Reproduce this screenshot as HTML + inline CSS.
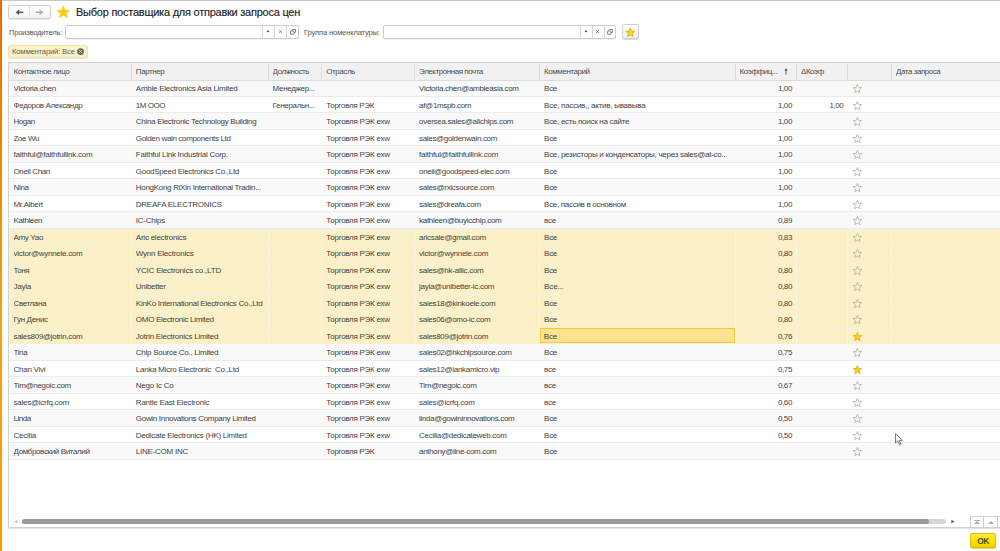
<!DOCTYPE html><html><head><meta charset="utf-8"><style>
*{box-sizing:border-box;margin:0;padding:0}
html,body{width:1000px;height:551px;overflow:hidden;background:#fff;font-family:"Liberation Sans",sans-serif;color:#444}
.a{position:absolute;white-space:nowrap}
.cell{position:absolute;overflow:hidden;white-space:nowrap;font-size:8px;letter-spacing:-0.25px;line-height:16.5px}
.r{padding-top:1.0px}
</style></head><body>
<div class="a" style="left:0;top:0;width:2px;height:551px;background:linear-gradient(#ee6a00 0%,#f48c00 35%,#f7a010 60%,#ff9a00 100%)"></div>
<div class="a" style="left:2px;top:0;width:998px;height:1px;background:#c8c8c8"></div>
<div class="a" style="left:8px;top:4.8px;width:42.5px;height:14.2px;border:1px solid #d0d0d0;border-radius:2px;background:linear-gradient(#fff,#f2f2f2);box-shadow:0 0.6px 0 #d6d6d6"></div>
<div class="a" style="left:28.9px;top:5.8px;width:1px;height:11.6px;background:#e2e2e2"></div>
<svg class="a" style="left:15px;top:9px" width="9" height="7" viewBox="0 0 9 7"><path d="M8.2 3.3H3.5" stroke="#555" stroke-width="1.5"/><path d="M0.6 3.3L4.2 0.4V6.2z" fill="#555"/></svg>
<svg class="a" style="left:35.2px;top:9px" width="9" height="7" viewBox="0 0 9 7"><path d="M0.8 3.3H5" stroke="#aaa" stroke-width="1.5"/><path d="M8.3 3.3L4.7 0.4V6.2z" fill="#aaa"/></svg>
<svg class="a" style="left:0;top:0" width="100" height="30"><path d="M63.40 5.91 L65.27 9.99 L69.96 10.40 L66.42 13.32 L67.46 17.65 L63.40 15.38 L59.34 17.65 L60.38 13.32 L56.84 10.40 L61.53 9.99Z" fill="#f8cb1c" stroke="#f3c418" stroke-width="0.4" stroke-linejoin="round"/></svg>
<div class="a" style="left:76px;top:5px;font-size:11px;letter-spacing:-0.24px;line-height:14px;color:#222;-webkit-text-stroke:0.15px #222">Выбор поставщика для отправки запроса цен</div>
<div class="a" style="left:9px;top:25.8px;font-size:7.6px;letter-spacing:-0.22px;line-height:14px;color:#555">Производитель:</div>
<div class="a" style="left:64.8px;top:24.8px;width:234.09999999999997px;height:14px;border:1px solid #cdcdcd;border-radius:2px;background:#fff;box-shadow:0 0.5px 0 #e6e6e6"></div><div class="a" style="left:262.0px;top:25.5px;width:1px;height:13px;background:#d6d6d6"></div><div class="a" style="left:274.0px;top:25.5px;width:1px;height:13px;background:#d6d6d6"></div><div class="a" style="left:286.0px;top:25.5px;width:1px;height:13px;background:#d6d6d6"></div><svg class="a" style="left:266.2px;top:29.5px" width="4" height="3" viewBox="0 0 4 3"><path d="M0.4 0.7h3.2L2 2.5z" fill="#333"/></svg><svg class="a" style="left:277.79999999999995px;top:29px" width="5" height="5" viewBox="0 0 5 5"><path d="M1 1.1L4 4.1M4 1.1L1 4.1" stroke="#777" stroke-width="0.8"/></svg><svg class="a" style="left:289.59999999999997px;top:28.5px" width="6" height="6" viewBox="0 0 6 6"><rect x="2.0" y="0.5" width="3.5" height="3.1" rx="0.25" fill="#fff" stroke="#666" stroke-width="0.75"/><rect x="0.5" y="2.1" width="3.5" height="3.2" rx="0.25" fill="#fff" stroke="#666" stroke-width="0.75"/></svg>
<div class="a" style="left:304px;top:25.8px;font-size:7.6px;letter-spacing:-0.17px;line-height:14px;color:#555">Группа номенклатуры:</div>
<div class="a" style="left:383.1px;top:24.8px;width:233.29999999999995px;height:14px;border:1px solid #cdcdcd;border-radius:2px;background:#fff;box-shadow:0 0.5px 0 #e6e6e6"></div><div class="a" style="left:579.5px;top:25.5px;width:1px;height:13px;background:#d6d6d6"></div><div class="a" style="left:591.5px;top:25.5px;width:1px;height:13px;background:#d6d6d6"></div><div class="a" style="left:603.5px;top:25.5px;width:1px;height:13px;background:#d6d6d6"></div><svg class="a" style="left:583.6999999999999px;top:29.5px" width="4" height="3" viewBox="0 0 4 3"><path d="M0.4 0.7h3.2L2 2.5z" fill="#333"/></svg><svg class="a" style="left:595.3px;top:29px" width="5" height="5" viewBox="0 0 5 5"><path d="M1 1.1L4 4.1M4 1.1L1 4.1" stroke="#777" stroke-width="0.8"/></svg><svg class="a" style="left:607.1px;top:28.5px" width="6" height="6" viewBox="0 0 6 6"><rect x="2.0" y="0.5" width="3.5" height="3.1" rx="0.25" fill="#fff" stroke="#666" stroke-width="0.75"/><rect x="0.5" y="2.1" width="3.5" height="3.2" rx="0.25" fill="#fff" stroke="#666" stroke-width="0.75"/></svg>
<div class="a" style="left:622px;top:24.3px;width:16.7px;height:14.4px;border:1px solid #d2d2d2;border-radius:2px;background:linear-gradient(#fff,#f0f0f0);box-shadow:0 0.7px 0 #d0d0d0"></div>
<svg class="a" style="left:620px;top:22px" width="20" height="20"><path d="M10.30 6.10 L11.54 9.09 L14.77 9.35 L12.31 11.45 L13.06 14.60 L10.30 12.92 L7.54 14.60 L8.29 11.45 L5.83 9.35 L9.06 9.09Z" fill="#f8d630" stroke="#e2a800" stroke-width="0.8" stroke-linejoin="round"/></svg>
<div class="a" style="left:8.4px;top:45px;width:79.2px;height:12.6px;border:1px solid #efe2b0;border-radius:2px;background:#fcf2c8;box-shadow:0 0.5px 0.5px #e8dcc0"></div>
<div class="a" style="left:12px;top:45.8px;font-size:7.6px;letter-spacing:-0.15px;line-height:12.5px;color:#5e5e5e">Комментарий: Все</div>
<svg class="a" style="left:76px;top:47px" width="9" height="9" viewBox="0 0 9 9"><circle cx="4.56" cy="4.55" r="3.4" fill="#6b6752"/><path d="M3 3L6.1 6.1M6.1 3L3 6.1" stroke="#ddd6b8" stroke-width="0.9"/></svg>
<div class="a" style="left:8px;top:62.2px;width:1000px;height:465.8px;border:1px solid #d2d2d2;background:#fff;box-shadow:0 1px 0 #e2e2e2"></div>
<div class="a" style="left:9px;top:63.2px;width:1000px;height:17.099999999999994px;background:#f1f1f1"></div>
<div class="cell" style="left:13.5px;top:62.900000000000006px;width:115.75px;line-height:17.099999999999994px;color:#4d4d4d;letter-spacing:-0.45px">Контактное лицо</div>
<div class="a" style="left:130.75px;top:63.2px;width:1px;height:17.099999999999994px;background:#dedede"></div>
<div class="cell" style="left:135.85px;top:62.900000000000006px;width:129.75px;line-height:17.099999999999994px;color:#4d4d4d;letter-spacing:-0.45px">Партнер</div>
<div class="a" style="left:267.5px;top:63.2px;width:1px;height:17.099999999999994px;background:#dedede"></div>
<div class="cell" style="left:272.6px;top:62.900000000000006px;width:46.75px;line-height:17.099999999999994px;color:#4d4d4d;letter-spacing:-0.45px">Должность</div>
<div class="a" style="left:321.25px;top:63.2px;width:1px;height:17.099999999999994px;background:#dedede"></div>
<div class="cell" style="left:326.35px;top:62.900000000000006px;width:85.75px;line-height:17.099999999999994px;color:#4d4d4d;letter-spacing:-0.45px">Отрасль</div>
<div class="a" style="left:414.0px;top:63.2px;width:1px;height:17.099999999999994px;background:#dedede"></div>
<div class="cell" style="left:419.1px;top:62.900000000000006px;width:118.0px;line-height:17.099999999999994px;color:#4d4d4d;letter-spacing:-0.45px">Электронная почта</div>
<div class="a" style="left:539.0px;top:63.2px;width:1px;height:17.099999999999994px;background:#dedede"></div>
<div class="cell" style="left:544.1px;top:62.900000000000006px;width:188.5px;line-height:17.099999999999994px;color:#4d4d4d;letter-spacing:-0.45px">Комментарий</div>
<div class="a" style="left:734.5px;top:63.2px;width:1px;height:17.099999999999994px;background:#dedede"></div>
<div class="cell" style="left:739.6px;top:62.900000000000006px;width:54.39999999999998px;line-height:17.099999999999994px;color:#4d4d4d;letter-spacing:-0.45px">Коэффиц...</div>
<div class="a" style="left:795.9px;top:63.2px;width:1px;height:17.099999999999994px;background:#dedede"></div>
<div class="cell" style="left:801.0px;top:62.900000000000006px;width:44.39999999999998px;line-height:17.099999999999994px;color:#4d4d4d;letter-spacing:-0.45px">ΔКоэф</div>
<div class="a" style="left:847.3px;top:63.2px;width:1px;height:17.099999999999994px;background:#dedede"></div>
<div class="cell" style="left:852.4px;top:62.900000000000006px;width:36.60000000000002px;line-height:17.099999999999994px;color:#4d4d4d;letter-spacing:-0.45px"></div>
<div class="a" style="left:890.9px;top:63.2px;width:1px;height:17.099999999999994px;background:#dedede"></div>
<div class="cell" style="left:896.0px;top:62.900000000000006px;width:111.60000000000002px;line-height:17.099999999999994px;color:#4d4d4d;letter-spacing:-0.45px">Дата запроса</div>
<svg class="a" style="left:782.3px;top:66.9px" width="8" height="9" viewBox="0 0 8 9"><path d="M4 7.6V3" stroke="#444" stroke-width="0.8"/><path d="M2.4 3.6L4 1.3 5.6 3.6z" fill="#444"/></svg>
<div class="a" style="left:9px;top:80.3px;width:1000px;height:16.5px;background:#f9f9f9;border-bottom:1px solid #ebebeb"></div>
<div class="cell r" style="left:13.5px;top:80.3px;width:116.25px;letter-spacing:-0.282px">Victoria.chen</div>
<div class="cell r" style="left:135.85px;top:80.3px;width:130.25px;letter-spacing:-0.262px">Amble Electronics Asia Limited</div>
<div class="cell r" style="left:272.6px;top:80.3px;width:47.25px;letter-spacing:-0.322px">Менеджер...</div>
<div class="cell r" style="left:419.1px;top:80.3px;width:118.5px;letter-spacing:-0.312px">Victoria.chen@ambleasia.com</div>
<div class="cell r" style="left:544.1px;top:80.3px;width:189.0px;letter-spacing:-0.299px">Все</div>
<div class="cell r" style="left:735px;top:80.3px;width:56.99999999999998px;text-align:right;overflow:visible;padding-right:0px;letter-spacing:-0.391px">1,00</div>
<svg class="a" style="left:848px;top:80.3px" width="20" height="16"><path d="M9.40 4.45 L10.60 7.34 L13.73 7.59 L11.35 9.63 L12.07 12.68 L9.40 11.05 L6.73 12.68 L7.45 9.63 L5.07 7.59 L8.20 7.34Z" fill="none" stroke="#bdb39e" stroke-width="0.85" stroke-linejoin="round"/></svg>
<div class="a" style="left:9px;top:96.8px;width:1000px;height:16.5px;background:#fff;border-bottom:1px solid #ebebeb"></div>
<div class="cell r" style="left:13.5px;top:96.8px;width:116.25px;letter-spacing:-0.355px">Федоров Александр</div>
<div class="cell r" style="left:135.85px;top:96.8px;width:130.25px;letter-spacing:-0.478px">1М ООО</div>
<div class="cell r" style="left:272.6px;top:96.8px;width:47.25px;letter-spacing:-0.324px">Генеральн...</div>
<div class="cell r" style="left:326.35px;top:96.8px;width:86.25px;letter-spacing:-0.302px">Торговля РЭК</div>
<div class="cell r" style="left:419.1px;top:96.8px;width:118.5px;letter-spacing:-0.336px">af@1mspb.com</div>
<div class="cell r" style="left:544.1px;top:96.8px;width:189.0px;letter-spacing:-0.247px">Все, пассив,, актив, ывавыва</div>
<div class="cell r" style="left:735px;top:96.8px;width:56.99999999999998px;text-align:right;overflow:visible;padding-right:0px;letter-spacing:-0.391px">1,00</div>
<div class="cell r" style="left:796.4px;top:96.8px;width:46.99999999999998px;text-align:right;overflow:visible;padding-right:0px;letter-spacing:-0.391px">1,00</div>
<svg class="a" style="left:848px;top:96.8px" width="20" height="16"><path d="M9.40 4.45 L10.60 7.34 L13.73 7.59 L11.35 9.63 L12.07 12.68 L9.40 11.05 L6.73 12.68 L7.45 9.63 L5.07 7.59 L8.20 7.34Z" fill="none" stroke="#bdb39e" stroke-width="0.85" stroke-linejoin="round"/></svg>
<div class="a" style="left:9px;top:113.3px;width:1000px;height:16.5px;background:#f9f9f9;border-bottom:1px solid #ebebeb"></div>
<div class="cell r" style="left:13.5px;top:113.3px;width:116.25px;letter-spacing:-0.457px">Hogan</div>
<div class="cell r" style="left:135.85px;top:113.3px;width:130.25px;letter-spacing:-0.304px">China Electronic Technology Building</div>
<div class="cell r" style="left:326.35px;top:113.3px;width:86.25px;letter-spacing:-0.274px">Торговля РЭК exw</div>
<div class="cell r" style="left:419.1px;top:113.3px;width:118.5px;letter-spacing:-0.283px">oversea.sales@allchips.com</div>
<div class="cell r" style="left:544.1px;top:113.3px;width:189.0px;letter-spacing:-0.278px">Все, есть поиск на сайте</div>
<div class="cell r" style="left:735px;top:113.3px;width:56.99999999999998px;text-align:right;overflow:visible;padding-right:0px;letter-spacing:-0.391px">1,00</div>
<svg class="a" style="left:848px;top:113.3px" width="20" height="16"><path d="M9.40 4.45 L10.60 7.34 L13.73 7.59 L11.35 9.63 L12.07 12.68 L9.40 11.05 L6.73 12.68 L7.45 9.63 L5.07 7.59 L8.20 7.34Z" fill="none" stroke="#bdb39e" stroke-width="0.85" stroke-linejoin="round"/></svg>
<div class="a" style="left:9px;top:129.8px;width:1000px;height:16.5px;background:#fff;border-bottom:1px solid #ebebeb"></div>
<div class="cell r" style="left:13.5px;top:129.8px;width:116.25px;letter-spacing:-0.372px">Zoe Wu</div>
<div class="cell r" style="left:135.85px;top:129.8px;width:130.25px;letter-spacing:-0.343px">Golden wain components Ltd</div>
<div class="cell r" style="left:326.35px;top:129.8px;width:86.25px;letter-spacing:-0.274px">Торговля РЭК exw</div>
<div class="cell r" style="left:419.1px;top:129.8px;width:118.5px;letter-spacing:-0.336px">sales@goldenwain.com</div>
<div class="cell r" style="left:544.1px;top:129.8px;width:189.0px;letter-spacing:-0.299px">Все</div>
<div class="cell r" style="left:735px;top:129.8px;width:56.99999999999998px;text-align:right;overflow:visible;padding-right:0px;letter-spacing:-0.391px">1,00</div>
<svg class="a" style="left:848px;top:129.8px" width="20" height="16"><path d="M9.40 4.45 L10.60 7.34 L13.73 7.59 L11.35 9.63 L12.07 12.68 L9.40 11.05 L6.73 12.68 L7.45 9.63 L5.07 7.59 L8.20 7.34Z" fill="none" stroke="#bdb39e" stroke-width="0.85" stroke-linejoin="round"/></svg>
<div class="a" style="left:9px;top:146.3px;width:1000px;height:16.5px;background:#f9f9f9;border-bottom:1px solid #ebebeb"></div>
<div class="cell r" style="left:13.5px;top:146.3px;width:116.25px;letter-spacing:-0.224px">faithful@faithfullink.com</div>
<div class="cell r" style="left:135.85px;top:146.3px;width:130.25px;letter-spacing:-0.257px">Faithful Link Industrial Corp.</div>
<div class="cell r" style="left:326.35px;top:146.3px;width:86.25px;letter-spacing:-0.274px">Торговля РЭК exw</div>
<div class="cell r" style="left:419.1px;top:146.3px;width:118.5px;letter-spacing:-0.224px">faithful@faithfullink.com</div>
<div class="cell r" style="left:544.1px;top:146.3px;width:189.0px;letter-spacing:-0.284px">Все, резисторы и конденсаторы, через sales@at-co...</div>
<div class="cell r" style="left:735px;top:146.3px;width:56.99999999999998px;text-align:right;overflow:visible;padding-right:0px;letter-spacing:-0.391px">1,00</div>
<svg class="a" style="left:848px;top:146.3px" width="20" height="16"><path d="M9.40 4.45 L10.60 7.34 L13.73 7.59 L11.35 9.63 L12.07 12.68 L9.40 11.05 L6.73 12.68 L7.45 9.63 L5.07 7.59 L8.20 7.34Z" fill="none" stroke="#bdb39e" stroke-width="0.85" stroke-linejoin="round"/></svg>
<div class="a" style="left:9px;top:162.8px;width:1000px;height:16.5px;background:#fff;border-bottom:1px solid #ebebeb"></div>
<div class="cell r" style="left:13.5px;top:162.8px;width:116.25px;letter-spacing:-0.360px">Oneil Chan</div>
<div class="cell r" style="left:135.85px;top:162.8px;width:130.25px;letter-spacing:-0.309px">GoodSpeed Electronics Co.,Ltd</div>
<div class="cell r" style="left:326.35px;top:162.8px;width:86.25px;letter-spacing:-0.274px">Торговля РЭК exw</div>
<div class="cell r" style="left:419.1px;top:162.8px;width:118.5px;letter-spacing:-0.379px">oneil@goodspeed-elec.com</div>
<div class="cell r" style="left:544.1px;top:162.8px;width:189.0px;letter-spacing:-0.299px">Все</div>
<div class="cell r" style="left:735px;top:162.8px;width:56.99999999999998px;text-align:right;overflow:visible;padding-right:0px;letter-spacing:-0.391px">1,00</div>
<svg class="a" style="left:848px;top:162.8px" width="20" height="16"><path d="M9.40 4.45 L10.60 7.34 L13.73 7.59 L11.35 9.63 L12.07 12.68 L9.40 11.05 L6.73 12.68 L7.45 9.63 L5.07 7.59 L8.20 7.34Z" fill="none" stroke="#bdb39e" stroke-width="0.85" stroke-linejoin="round"/></svg>
<div class="a" style="left:9px;top:179.3px;width:1000px;height:16.5px;background:#f9f9f9;border-bottom:1px solid #ebebeb"></div>
<div class="cell r" style="left:13.5px;top:179.3px;width:116.25px;letter-spacing:-0.331px">Nina</div>
<div class="cell r" style="left:135.85px;top:179.3px;width:130.25px;letter-spacing:-0.302px">HongKong RiXin International Tradin...</div>
<div class="cell r" style="left:326.35px;top:179.3px;width:86.25px;letter-spacing:-0.274px">Торговля РЭК exw</div>
<div class="cell r" style="left:419.1px;top:179.3px;width:118.5px;letter-spacing:-0.275px">sales@rxicsource.com</div>
<div class="cell r" style="left:544.1px;top:179.3px;width:189.0px;letter-spacing:-0.299px">Все</div>
<div class="cell r" style="left:735px;top:179.3px;width:56.99999999999998px;text-align:right;overflow:visible;padding-right:0px;letter-spacing:-0.391px">1,00</div>
<svg class="a" style="left:848px;top:179.3px" width="20" height="16"><path d="M9.40 4.45 L10.60 7.34 L13.73 7.59 L11.35 9.63 L12.07 12.68 L9.40 11.05 L6.73 12.68 L7.45 9.63 L5.07 7.59 L8.20 7.34Z" fill="none" stroke="#bdb39e" stroke-width="0.85" stroke-linejoin="round"/></svg>
<div class="a" style="left:9px;top:195.8px;width:1000px;height:16.5px;background:#fff;border-bottom:1px solid #ebebeb"></div>
<div class="cell r" style="left:13.5px;top:195.8px;width:116.25px;letter-spacing:-0.306px">Mr.Albert</div>
<div class="cell r" style="left:135.85px;top:195.8px;width:130.25px;letter-spacing:-0.262px">DREAFA ELECTRONICS</div>
<div class="cell r" style="left:326.35px;top:195.8px;width:86.25px;letter-spacing:-0.274px">Торговля РЭК exw</div>
<div class="cell r" style="left:419.1px;top:195.8px;width:118.5px;letter-spacing:-0.324px">sales@dreafa.com</div>
<div class="cell r" style="left:544.1px;top:195.8px;width:189.0px;letter-spacing:-0.298px">Все, пассив в основном</div>
<div class="cell r" style="left:735px;top:195.8px;width:56.99999999999998px;text-align:right;overflow:visible;padding-right:0px;letter-spacing:-0.391px">1,00</div>
<svg class="a" style="left:848px;top:195.8px" width="20" height="16"><path d="M9.40 4.45 L10.60 7.34 L13.73 7.59 L11.35 9.63 L12.07 12.68 L9.40 11.05 L6.73 12.68 L7.45 9.63 L5.07 7.59 L8.20 7.34Z" fill="none" stroke="#bdb39e" stroke-width="0.85" stroke-linejoin="round"/></svg>
<div class="a" style="left:9px;top:212.3px;width:1000px;height:16.5px;background:#f9f9f9;border-bottom:1px solid #ebebeb"></div>
<div class="cell r" style="left:13.5px;top:212.3px;width:116.25px;letter-spacing:-0.376px">Kathleen</div>
<div class="cell r" style="left:135.85px;top:212.3px;width:130.25px;letter-spacing:-0.248px">IC-Chips</div>
<div class="cell r" style="left:326.35px;top:212.3px;width:86.25px;letter-spacing:-0.274px">Торговля РЭК exw</div>
<div class="cell r" style="left:419.1px;top:212.3px;width:118.5px;letter-spacing:-0.304px">kathleen@buyicchip.com</div>
<div class="cell r" style="left:544.1px;top:212.3px;width:189.0px;letter-spacing:-0.311px">все</div>
<div class="cell r" style="left:735px;top:212.3px;width:56.99999999999998px;text-align:right;overflow:visible;padding-right:0px;letter-spacing:-0.391px">0,89</div>
<svg class="a" style="left:848px;top:212.3px" width="20" height="16"><path d="M9.40 4.45 L10.60 7.34 L13.73 7.59 L11.35 9.63 L12.07 12.68 L9.40 11.05 L6.73 12.68 L7.45 9.63 L5.07 7.59 L8.20 7.34Z" fill="none" stroke="#bdb39e" stroke-width="0.85" stroke-linejoin="round"/></svg>
<div class="a" style="left:9px;top:228.8px;width:1000px;height:16.5px;background:#fcf0c6;border-top:1px solid #f4f0e6"></div>
<div class="a" style="left:130.75px;top:229.8px;width:1px;height:15.5px;background:#fdf6e0"></div>
<div class="a" style="left:267.5px;top:229.8px;width:1px;height:15.5px;background:#fdf6e0"></div>
<div class="a" style="left:321.25px;top:229.8px;width:1px;height:15.5px;background:#fdf6e0"></div>
<div class="a" style="left:414.0px;top:229.8px;width:1px;height:15.5px;background:#fdf6e0"></div>
<div class="a" style="left:539.0px;top:229.8px;width:1px;height:15.5px;background:#fdf6e0"></div>
<div class="a" style="left:734.5px;top:229.8px;width:1px;height:15.5px;background:#fdf6e0"></div>
<div class="a" style="left:795.9px;top:229.8px;width:1px;height:15.5px;background:#fdf6e0"></div>
<div class="a" style="left:847.3px;top:229.8px;width:1px;height:15.5px;background:#fdf6e0"></div>
<div class="a" style="left:890.9px;top:229.8px;width:1px;height:15.5px;background:#fdf6e0"></div>
<div class="cell r" style="left:13.5px;top:228.8px;width:116.25px;letter-spacing:-0.314px">Amy Yao</div>
<div class="cell r" style="left:135.85px;top:228.8px;width:130.25px;letter-spacing:-0.238px">Aric electronics</div>
<div class="cell r" style="left:326.35px;top:228.8px;width:86.25px;letter-spacing:-0.274px">Торговля РЭК exw</div>
<div class="cell r" style="left:419.1px;top:228.8px;width:118.5px;letter-spacing:-0.304px">aricsale@gmail.com</div>
<div class="cell r" style="left:544.1px;top:228.8px;width:189.0px;letter-spacing:-0.299px">Все</div>
<div class="cell r" style="left:735px;top:228.8px;width:56.99999999999998px;text-align:right;overflow:visible;padding-right:0px;letter-spacing:-0.391px">0,83</div>
<svg class="a" style="left:848px;top:228.8px" width="20" height="16"><path d="M9.40 4.45 L10.60 7.34 L13.73 7.59 L11.35 9.63 L12.07 12.68 L9.40 11.05 L6.73 12.68 L7.45 9.63 L5.07 7.59 L8.20 7.34Z" fill="none" stroke="#bdb39e" stroke-width="0.85" stroke-linejoin="round"/></svg>
<div class="a" style="left:9px;top:245.3px;width:1000px;height:16.5px;background:#fcf0c6;border-top:1px solid #f4f0e6"></div>
<div class="a" style="left:130.75px;top:246.3px;width:1px;height:15.5px;background:#fdf6e0"></div>
<div class="a" style="left:267.5px;top:246.3px;width:1px;height:15.5px;background:#fdf6e0"></div>
<div class="a" style="left:321.25px;top:246.3px;width:1px;height:15.5px;background:#fdf6e0"></div>
<div class="a" style="left:414.0px;top:246.3px;width:1px;height:15.5px;background:#fdf6e0"></div>
<div class="a" style="left:539.0px;top:246.3px;width:1px;height:15.5px;background:#fdf6e0"></div>
<div class="a" style="left:734.5px;top:246.3px;width:1px;height:15.5px;background:#fdf6e0"></div>
<div class="a" style="left:795.9px;top:246.3px;width:1px;height:15.5px;background:#fdf6e0"></div>
<div class="a" style="left:847.3px;top:246.3px;width:1px;height:15.5px;background:#fdf6e0"></div>
<div class="a" style="left:890.9px;top:246.3px;width:1px;height:15.5px;background:#fdf6e0"></div>
<div class="cell r" style="left:13.5px;top:245.3px;width:116.25px;letter-spacing:-0.278px">victor@wynnele.com</div>
<div class="cell r" style="left:135.85px;top:245.3px;width:130.25px;letter-spacing:-0.255px">Wynn Electronics</div>
<div class="cell r" style="left:326.35px;top:245.3px;width:86.25px;letter-spacing:-0.274px">Торговля РЭК exw</div>
<div class="cell r" style="left:419.1px;top:245.3px;width:118.5px;letter-spacing:-0.278px">victor@wynnele.com</div>
<div class="cell r" style="left:544.1px;top:245.3px;width:189.0px;letter-spacing:-0.299px">Все</div>
<div class="cell r" style="left:735px;top:245.3px;width:56.99999999999998px;text-align:right;overflow:visible;padding-right:0px;letter-spacing:-0.391px">0,80</div>
<svg class="a" style="left:848px;top:245.3px" width="20" height="16"><path d="M9.40 4.45 L10.60 7.34 L13.73 7.59 L11.35 9.63 L12.07 12.68 L9.40 11.05 L6.73 12.68 L7.45 9.63 L5.07 7.59 L8.20 7.34Z" fill="none" stroke="#bdb39e" stroke-width="0.85" stroke-linejoin="round"/></svg>
<div class="a" style="left:9px;top:261.8px;width:1000px;height:16.5px;background:#fcf0c6;border-top:1px solid #f4f0e6"></div>
<div class="a" style="left:130.75px;top:262.8px;width:1px;height:15.5px;background:#fdf6e0"></div>
<div class="a" style="left:267.5px;top:262.8px;width:1px;height:15.5px;background:#fdf6e0"></div>
<div class="a" style="left:321.25px;top:262.8px;width:1px;height:15.5px;background:#fdf6e0"></div>
<div class="a" style="left:414.0px;top:262.8px;width:1px;height:15.5px;background:#fdf6e0"></div>
<div class="a" style="left:539.0px;top:262.8px;width:1px;height:15.5px;background:#fdf6e0"></div>
<div class="a" style="left:734.5px;top:262.8px;width:1px;height:15.5px;background:#fdf6e0"></div>
<div class="a" style="left:795.9px;top:262.8px;width:1px;height:15.5px;background:#fdf6e0"></div>
<div class="a" style="left:847.3px;top:262.8px;width:1px;height:15.5px;background:#fdf6e0"></div>
<div class="a" style="left:890.9px;top:262.8px;width:1px;height:15.5px;background:#fdf6e0"></div>
<div class="cell r" style="left:13.5px;top:261.8px;width:116.25px;letter-spacing:-0.459px">Тоня</div>
<div class="cell r" style="left:135.85px;top:261.8px;width:130.25px;letter-spacing:-0.207px">YCIC Electronics co.,LTD</div>
<div class="cell r" style="left:326.35px;top:261.8px;width:86.25px;letter-spacing:-0.274px">Торговля РЭК exw</div>
<div class="cell r" style="left:419.1px;top:261.8px;width:118.5px;letter-spacing:-0.255px">sales@hk-allic.com</div>
<div class="cell r" style="left:544.1px;top:261.8px;width:189.0px;letter-spacing:-0.299px">Все</div>
<div class="cell r" style="left:735px;top:261.8px;width:56.99999999999998px;text-align:right;overflow:visible;padding-right:0px;letter-spacing:-0.391px">0,80</div>
<svg class="a" style="left:848px;top:261.8px" width="20" height="16"><path d="M9.40 4.45 L10.60 7.34 L13.73 7.59 L11.35 9.63 L12.07 12.68 L9.40 11.05 L6.73 12.68 L7.45 9.63 L5.07 7.59 L8.20 7.34Z" fill="none" stroke="#bdb39e" stroke-width="0.85" stroke-linejoin="round"/></svg>
<div class="a" style="left:9px;top:278.3px;width:1000px;height:16.5px;background:#fcf0c6;border-top:1px solid #f4f0e6"></div>
<div class="a" style="left:130.75px;top:279.3px;width:1px;height:15.5px;background:#fdf6e0"></div>
<div class="a" style="left:267.5px;top:279.3px;width:1px;height:15.5px;background:#fdf6e0"></div>
<div class="a" style="left:321.25px;top:279.3px;width:1px;height:15.5px;background:#fdf6e0"></div>
<div class="a" style="left:414.0px;top:279.3px;width:1px;height:15.5px;background:#fdf6e0"></div>
<div class="a" style="left:539.0px;top:279.3px;width:1px;height:15.5px;background:#fdf6e0"></div>
<div class="a" style="left:734.5px;top:279.3px;width:1px;height:15.5px;background:#fdf6e0"></div>
<div class="a" style="left:795.9px;top:279.3px;width:1px;height:15.5px;background:#fdf6e0"></div>
<div class="a" style="left:847.3px;top:279.3px;width:1px;height:15.5px;background:#fdf6e0"></div>
<div class="a" style="left:890.9px;top:279.3px;width:1px;height:15.5px;background:#fdf6e0"></div>
<div class="cell r" style="left:13.5px;top:278.3px;width:116.25px;letter-spacing:-0.261px">Jayla</div>
<div class="cell r" style="left:135.85px;top:278.3px;width:130.25px;letter-spacing:-0.307px">Unibetter</div>
<div class="cell r" style="left:326.35px;top:278.3px;width:86.25px;letter-spacing:-0.274px">Торговля РЭК exw</div>
<div class="cell r" style="left:419.1px;top:278.3px;width:118.5px;letter-spacing:-0.291px">jayla@unibetter-ic.com</div>
<div class="cell r" style="left:544.1px;top:278.3px;width:189.0px;letter-spacing:-0.140px">Все...</div>
<div class="cell r" style="left:735px;top:278.3px;width:56.99999999999998px;text-align:right;overflow:visible;padding-right:0px;letter-spacing:-0.391px">0,80</div>
<svg class="a" style="left:848px;top:278.3px" width="20" height="16"><path d="M9.40 4.45 L10.60 7.34 L13.73 7.59 L11.35 9.63 L12.07 12.68 L9.40 11.05 L6.73 12.68 L7.45 9.63 L5.07 7.59 L8.20 7.34Z" fill="none" stroke="#bdb39e" stroke-width="0.85" stroke-linejoin="round"/></svg>
<div class="a" style="left:9px;top:294.8px;width:1000px;height:16.5px;background:#fcf0c6;border-top:1px solid #f4f0e6"></div>
<div class="a" style="left:130.75px;top:295.8px;width:1px;height:15.5px;background:#fdf6e0"></div>
<div class="a" style="left:267.5px;top:295.8px;width:1px;height:15.5px;background:#fdf6e0"></div>
<div class="a" style="left:321.25px;top:295.8px;width:1px;height:15.5px;background:#fdf6e0"></div>
<div class="a" style="left:414.0px;top:295.8px;width:1px;height:15.5px;background:#fdf6e0"></div>
<div class="a" style="left:539.0px;top:295.8px;width:1px;height:15.5px;background:#fdf6e0"></div>
<div class="a" style="left:734.5px;top:295.8px;width:1px;height:15.5px;background:#fdf6e0"></div>
<div class="a" style="left:795.9px;top:295.8px;width:1px;height:15.5px;background:#fdf6e0"></div>
<div class="a" style="left:847.3px;top:295.8px;width:1px;height:15.5px;background:#fdf6e0"></div>
<div class="a" style="left:890.9px;top:295.8px;width:1px;height:15.5px;background:#fdf6e0"></div>
<div class="cell r" style="left:13.5px;top:294.8px;width:116.25px;letter-spacing:-0.383px">Светлана</div>
<div class="cell r" style="left:135.85px;top:294.8px;width:130.25px;letter-spacing:-0.265px">KinKo International Electronics Co.,Ltd</div>
<div class="cell r" style="left:326.35px;top:294.8px;width:86.25px;letter-spacing:-0.274px">Торговля РЭК exw</div>
<div class="cell r" style="left:419.1px;top:294.8px;width:118.5px;letter-spacing:-0.309px">sales18@kinkoele.com</div>
<div class="cell r" style="left:544.1px;top:294.8px;width:189.0px;letter-spacing:-0.299px">Все</div>
<div class="cell r" style="left:735px;top:294.8px;width:56.99999999999998px;text-align:right;overflow:visible;padding-right:0px;letter-spacing:-0.391px">0,80</div>
<svg class="a" style="left:848px;top:294.8px" width="20" height="16"><path d="M9.40 4.45 L10.60 7.34 L13.73 7.59 L11.35 9.63 L12.07 12.68 L9.40 11.05 L6.73 12.68 L7.45 9.63 L5.07 7.59 L8.20 7.34Z" fill="none" stroke="#bdb39e" stroke-width="0.85" stroke-linejoin="round"/></svg>
<div class="a" style="left:9px;top:311.3px;width:1000px;height:16.5px;background:#fcf0c6;border-top:1px solid #f4f0e6"></div>
<div class="a" style="left:130.75px;top:312.3px;width:1px;height:15.5px;background:#fdf6e0"></div>
<div class="a" style="left:267.5px;top:312.3px;width:1px;height:15.5px;background:#fdf6e0"></div>
<div class="a" style="left:321.25px;top:312.3px;width:1px;height:15.5px;background:#fdf6e0"></div>
<div class="a" style="left:414.0px;top:312.3px;width:1px;height:15.5px;background:#fdf6e0"></div>
<div class="a" style="left:539.0px;top:312.3px;width:1px;height:15.5px;background:#fdf6e0"></div>
<div class="a" style="left:734.5px;top:312.3px;width:1px;height:15.5px;background:#fdf6e0"></div>
<div class="a" style="left:795.9px;top:312.3px;width:1px;height:15.5px;background:#fdf6e0"></div>
<div class="a" style="left:847.3px;top:312.3px;width:1px;height:15.5px;background:#fdf6e0"></div>
<div class="a" style="left:890.9px;top:312.3px;width:1px;height:15.5px;background:#fdf6e0"></div>
<div class="cell r" style="left:13.5px;top:311.3px;width:116.25px;letter-spacing:-0.332px">Гун Денис</div>
<div class="cell r" style="left:135.85px;top:311.3px;width:130.25px;letter-spacing:-0.299px">OMO Electronic Limited</div>
<div class="cell r" style="left:326.35px;top:311.3px;width:86.25px;letter-spacing:-0.274px">Торговля РЭК exw</div>
<div class="cell r" style="left:419.1px;top:311.3px;width:118.5px;letter-spacing:-0.327px">sales06@omo-ic.com</div>
<div class="cell r" style="left:544.1px;top:311.3px;width:189.0px;letter-spacing:-0.299px">Все</div>
<div class="cell r" style="left:735px;top:311.3px;width:56.99999999999998px;text-align:right;overflow:visible;padding-right:0px;letter-spacing:-0.391px">0,80</div>
<svg class="a" style="left:848px;top:311.3px" width="20" height="16"><path d="M9.40 4.45 L10.60 7.34 L13.73 7.59 L11.35 9.63 L12.07 12.68 L9.40 11.05 L6.73 12.68 L7.45 9.63 L5.07 7.59 L8.20 7.34Z" fill="none" stroke="#bdb39e" stroke-width="0.85" stroke-linejoin="round"/></svg>
<div class="a" style="left:9px;top:327.8px;width:1000px;height:16.5px;background:#fcf0c6;border-top:1px solid #f4f0e6"></div>
<div class="a" style="left:130.75px;top:328.8px;width:1px;height:15.5px;background:#fdf6e0"></div>
<div class="a" style="left:267.5px;top:328.8px;width:1px;height:15.5px;background:#fdf6e0"></div>
<div class="a" style="left:321.25px;top:328.8px;width:1px;height:15.5px;background:#fdf6e0"></div>
<div class="a" style="left:414.0px;top:328.8px;width:1px;height:15.5px;background:#fdf6e0"></div>
<div class="a" style="left:539.0px;top:328.8px;width:1px;height:15.5px;background:#fdf6e0"></div>
<div class="a" style="left:734.5px;top:328.8px;width:1px;height:15.5px;background:#fdf6e0"></div>
<div class="a" style="left:795.9px;top:328.8px;width:1px;height:15.5px;background:#fdf6e0"></div>
<div class="a" style="left:847.3px;top:328.8px;width:1px;height:15.5px;background:#fdf6e0"></div>
<div class="a" style="left:890.9px;top:328.8px;width:1px;height:15.5px;background:#fdf6e0"></div>
<div class="cell r" style="left:13.5px;top:327.8px;width:116.25px;letter-spacing:-0.311px">sales809@jotrin.com</div>
<div class="cell r" style="left:135.85px;top:327.8px;width:130.25px;letter-spacing:-0.252px">Jotrin Electronics Limited</div>
<div class="cell r" style="left:326.35px;top:327.8px;width:86.25px;letter-spacing:-0.274px">Торговля РЭК exw</div>
<div class="cell r" style="left:419.1px;top:327.8px;width:118.5px;letter-spacing:-0.311px">sales809@jotrin.com</div>
<div class="cell r" style="left:544.1px;top:327.8px;width:189.0px;letter-spacing:-0.299px">Все</div>
<div class="cell r" style="left:735px;top:327.8px;width:56.99999999999998px;text-align:right;overflow:visible;padding-right:0px;letter-spacing:-0.391px">0,76</div>
<svg class="a" style="left:848px;top:327.8px" width="20" height="16"><path d="M9.40 4.45 L10.60 7.34 L13.73 7.59 L11.35 9.63 L12.07 12.68 L9.40 11.05 L6.73 12.68 L7.45 9.63 L5.07 7.59 L8.20 7.34Z" fill="#f7cd22" stroke="#e0b020" stroke-width="0.8" stroke-linejoin="round"/></svg>
<div class="a" style="left:9px;top:344.3px;width:1000px;height:16.5px;background:#f9f9f9;border-bottom:1px solid #ebebeb"></div>
<div class="cell r" style="left:13.5px;top:344.3px;width:116.25px;letter-spacing:-0.389px">Tina</div>
<div class="cell r" style="left:135.85px;top:344.3px;width:130.25px;letter-spacing:-0.274px">Chip Source Co., Limited</div>
<div class="cell r" style="left:326.35px;top:344.3px;width:86.25px;letter-spacing:-0.274px">Торговля РЭК exw</div>
<div class="cell r" style="left:419.1px;top:344.3px;width:118.5px;letter-spacing:-0.322px">sales02@hkchipsource.com</div>
<div class="cell r" style="left:544.1px;top:344.3px;width:189.0px;letter-spacing:-0.299px">Все</div>
<div class="cell r" style="left:735px;top:344.3px;width:56.99999999999998px;text-align:right;overflow:visible;padding-right:0px;letter-spacing:-0.391px">0,75</div>
<svg class="a" style="left:848px;top:344.3px" width="20" height="16"><path d="M9.40 4.45 L10.60 7.34 L13.73 7.59 L11.35 9.63 L12.07 12.68 L9.40 11.05 L6.73 12.68 L7.45 9.63 L5.07 7.59 L8.20 7.34Z" fill="none" stroke="#bdb39e" stroke-width="0.85" stroke-linejoin="round"/></svg>
<div class="a" style="left:9px;top:360.8px;width:1000px;height:16.5px;background:#fff;border-bottom:1px solid #ebebeb"></div>
<div class="cell r" style="left:13.5px;top:360.8px;width:116.25px;letter-spacing:-0.256px">Chan Vivi</div>
<div class="cell r" style="left:135.85px;top:360.8px;width:130.25px;letter-spacing:-0.260px">Lanka Micro Electronic&nbsp; Co.,Ltd</div>
<div class="cell r" style="left:326.35px;top:360.8px;width:86.25px;letter-spacing:-0.274px">Торговля РЭК exw</div>
<div class="cell r" style="left:419.1px;top:360.8px;width:118.5px;letter-spacing:-0.305px">sales12@lankamicro.vip</div>
<div class="cell r" style="left:544.1px;top:360.8px;width:189.0px;letter-spacing:-0.311px">все</div>
<div class="cell r" style="left:735px;top:360.8px;width:56.99999999999998px;text-align:right;overflow:visible;padding-right:0px;letter-spacing:-0.391px">0,75</div>
<svg class="a" style="left:848px;top:360.8px" width="20" height="16"><path d="M9.40 4.45 L10.60 7.34 L13.73 7.59 L11.35 9.63 L12.07 12.68 L9.40 11.05 L6.73 12.68 L7.45 9.63 L5.07 7.59 L8.20 7.34Z" fill="#f7cd22" stroke="#e0b020" stroke-width="0.8" stroke-linejoin="round"/></svg>
<div class="a" style="left:9px;top:377.3px;width:1000px;height:16.5px;background:#f9f9f9;border-bottom:1px solid #ebebeb"></div>
<div class="cell r" style="left:13.5px;top:377.3px;width:116.25px;letter-spacing:-0.332px">Tim@negoic.com</div>
<div class="cell r" style="left:135.85px;top:377.3px;width:130.25px;letter-spacing:-0.248px">Nego Ic Co</div>
<div class="cell r" style="left:326.35px;top:377.3px;width:86.25px;letter-spacing:-0.274px">Торговля РЭК exw</div>
<div class="cell r" style="left:419.1px;top:377.3px;width:118.5px;letter-spacing:-0.332px">Tim@negoic.com</div>
<div class="cell r" style="left:544.1px;top:377.3px;width:189.0px;letter-spacing:-0.311px">все</div>
<div class="cell r" style="left:735px;top:377.3px;width:56.99999999999998px;text-align:right;overflow:visible;padding-right:0px;letter-spacing:-0.391px">0,67</div>
<svg class="a" style="left:848px;top:377.3px" width="20" height="16"><path d="M9.40 4.45 L10.60 7.34 L13.73 7.59 L11.35 9.63 L12.07 12.68 L9.40 11.05 L6.73 12.68 L7.45 9.63 L5.07 7.59 L8.20 7.34Z" fill="none" stroke="#bdb39e" stroke-width="0.85" stroke-linejoin="round"/></svg>
<div class="a" style="left:9px;top:393.8px;width:1000px;height:16.5px;background:#fff;border-bottom:1px solid #ebebeb"></div>
<div class="cell r" style="left:13.5px;top:393.8px;width:116.25px;letter-spacing:-0.252px">sales@icrfq.com</div>
<div class="cell r" style="left:135.85px;top:393.8px;width:130.25px;letter-spacing:-0.241px">Rantle East Electronic</div>
<div class="cell r" style="left:326.35px;top:393.8px;width:86.25px;letter-spacing:-0.274px">Торговля РЭК exw</div>
<div class="cell r" style="left:419.1px;top:393.8px;width:118.5px;letter-spacing:-0.252px">sales@icrfq.com</div>
<div class="cell r" style="left:544.1px;top:393.8px;width:189.0px;letter-spacing:-0.311px">все</div>
<div class="cell r" style="left:735px;top:393.8px;width:56.99999999999998px;text-align:right;overflow:visible;padding-right:0px;letter-spacing:-0.391px">0,60</div>
<svg class="a" style="left:848px;top:393.8px" width="20" height="16"><path d="M9.40 4.45 L10.60 7.34 L13.73 7.59 L11.35 9.63 L12.07 12.68 L9.40 11.05 L6.73 12.68 L7.45 9.63 L5.07 7.59 L8.20 7.34Z" fill="none" stroke="#bdb39e" stroke-width="0.85" stroke-linejoin="round"/></svg>
<div class="a" style="left:9px;top:410.3px;width:1000px;height:16.5px;background:#f9f9f9;border-bottom:1px solid #ebebeb"></div>
<div class="cell r" style="left:13.5px;top:410.3px;width:116.25px;letter-spacing:-0.441px">Linda</div>
<div class="cell r" style="left:135.85px;top:410.3px;width:130.25px;letter-spacing:-0.315px">Gowin Innovations Company Limited</div>
<div class="cell r" style="left:326.35px;top:410.3px;width:86.25px;letter-spacing:-0.274px">Торговля РЭК exw</div>
<div class="cell r" style="left:419.1px;top:410.3px;width:118.5px;letter-spacing:-0.326px">linda@gowininnovations.com</div>
<div class="cell r" style="left:544.1px;top:410.3px;width:189.0px;letter-spacing:-0.299px">Все</div>
<div class="cell r" style="left:735px;top:410.3px;width:56.99999999999998px;text-align:right;overflow:visible;padding-right:0px;letter-spacing:-0.391px">0,50</div>
<svg class="a" style="left:848px;top:410.3px" width="20" height="16"><path d="M9.40 4.45 L10.60 7.34 L13.73 7.59 L11.35 9.63 L12.07 12.68 L9.40 11.05 L6.73 12.68 L7.45 9.63 L5.07 7.59 L8.20 7.34Z" fill="none" stroke="#bdb39e" stroke-width="0.85" stroke-linejoin="round"/></svg>
<div class="a" style="left:9px;top:426.8px;width:1000px;height:16.5px;background:#fff;border-bottom:1px solid #ebebeb"></div>
<div class="cell r" style="left:13.5px;top:426.8px;width:116.25px;letter-spacing:-0.228px">Cecilia</div>
<div class="cell r" style="left:135.85px;top:426.8px;width:130.25px;letter-spacing:-0.262px">Dedicate Electronics (HK) Limited</div>
<div class="cell r" style="left:326.35px;top:426.8px;width:86.25px;letter-spacing:-0.274px">Торговля РЭК exw</div>
<div class="cell r" style="left:419.1px;top:426.8px;width:118.5px;letter-spacing:-0.303px">Cecilia@dedicateweb.com</div>
<div class="cell r" style="left:544.1px;top:426.8px;width:189.0px;letter-spacing:-0.299px">Все</div>
<div class="cell r" style="left:735px;top:426.8px;width:56.99999999999998px;text-align:right;overflow:visible;padding-right:0px;letter-spacing:-0.391px">0,50</div>
<svg class="a" style="left:848px;top:426.8px" width="20" height="16"><path d="M9.40 4.45 L10.60 7.34 L13.73 7.59 L11.35 9.63 L12.07 12.68 L9.40 11.05 L6.73 12.68 L7.45 9.63 L5.07 7.59 L8.20 7.34Z" fill="none" stroke="#bdb39e" stroke-width="0.85" stroke-linejoin="round"/></svg>
<div class="a" style="left:9px;top:443.3px;width:1000px;height:16.5px;background:#f9f9f9;border-bottom:1px solid #ebebeb"></div>
<div class="cell r" style="left:13.5px;top:443.3px;width:116.25px;letter-spacing:-0.373px">Домбровский Виталий</div>
<div class="cell r" style="left:135.85px;top:443.3px;width:130.25px;letter-spacing:-0.250px">LINE-COM INC</div>
<div class="cell r" style="left:326.35px;top:443.3px;width:86.25px;letter-spacing:-0.302px">Торговля РЭК</div>
<div class="cell r" style="left:419.1px;top:443.3px;width:118.5px;letter-spacing:-0.342px">anthony@line-com.com</div>
<div class="cell r" style="left:544.1px;top:443.3px;width:189.0px;letter-spacing:-0.299px">Все</div>
<svg class="a" style="left:848px;top:443.3px" width="20" height="16"><path d="M9.40 4.45 L10.60 7.34 L13.73 7.59 L11.35 9.63 L12.07 12.68 L9.40 11.05 L6.73 12.68 L7.45 9.63 L5.07 7.59 L8.20 7.34Z" fill="none" stroke="#bdb39e" stroke-width="0.85" stroke-linejoin="round"/></svg>
<div class="a" style="left:9px;top:79.5px;width:1000px;height:1px;background:#dcdcdc"></div>
<div class="a" style="left:540px;top:328.1px;width:194.5px;height:15.2px;border:1px solid #f3c640;background:#fde38f"></div>
<div class="cell r" style="left:543.8px;top:327.8px;width:190px">Все</div>
<svg class="a" style="left:13px;top:518px" width="6" height="7"><path d="M4.4 2.2L1.6 3.6 4.4 5z" fill="#b0b0b0"/></svg>
<div class="a" style="left:22px;top:518.5px;width:924px;height:5px;border-radius:3px;background:#d5d5d5"></div>
<div class="a" style="left:22px;top:518.5px;width:907px;height:5px;border-radius:3px;background:#999"></div>
<svg class="a" style="left:950px;top:518px" width="6" height="7"><path d="M1.4 2L4.3 3.6 1.4 5.2z" fill="#444"/></svg>
<div class="a" style="left:970px;top:516px;width:40px;height:12px;border:1px solid #d0d0d0;background:#fff"></div>
<div class="a" style="left:983px;top:516px;width:1px;height:12px;background:#d0d0d0"></div>
<div class="a" style="left:997px;top:516px;width:1px;height:12px;background:#d0d0d0"></div>
<div class="a" style="left:974px;top:519.8px;width:6px;height:1px;background:#b4b4b4"></div>
<div class="a" style="left:974px;top:520.5px;width:0;height:0;border-left:3px solid transparent;border-right:3px solid transparent;border-bottom:3px solid #aaa"></div>
<div class="a" style="left:988px;top:520.5px;width:0;height:0;border-left:3px solid transparent;border-right:3px solid transparent;border-bottom:3px solid #aaa"></div>
<div class="a" style="left:970px;top:533.4px;width:25.8px;height:14.4px;border:1px solid #d8c000;border-radius:2px;background:linear-gradient(#ffec40,#ffe000 50%,#f2d200);box-shadow:0 0.5px 0 #c9b400"></div>
<div class="a" style="left:970px;top:534px;width:25.8px;height:14.4px;text-align:center;font-size:8.3px;letter-spacing:-0.5px;line-height:14.4px;font-weight:bold;color:#4d4a20">OK</div>
<svg class="a" style="left:895.2px;top:433.3px" width="9" height="14" viewBox="0 0 9 14"><path d="M0.5 0.5v9.5l2.2-2.1 1.9 3.9 1.4-.7-1.9-3.7h3.2z" fill="#fff" stroke="#555" stroke-width="0.8"/></svg>
</body></html>
